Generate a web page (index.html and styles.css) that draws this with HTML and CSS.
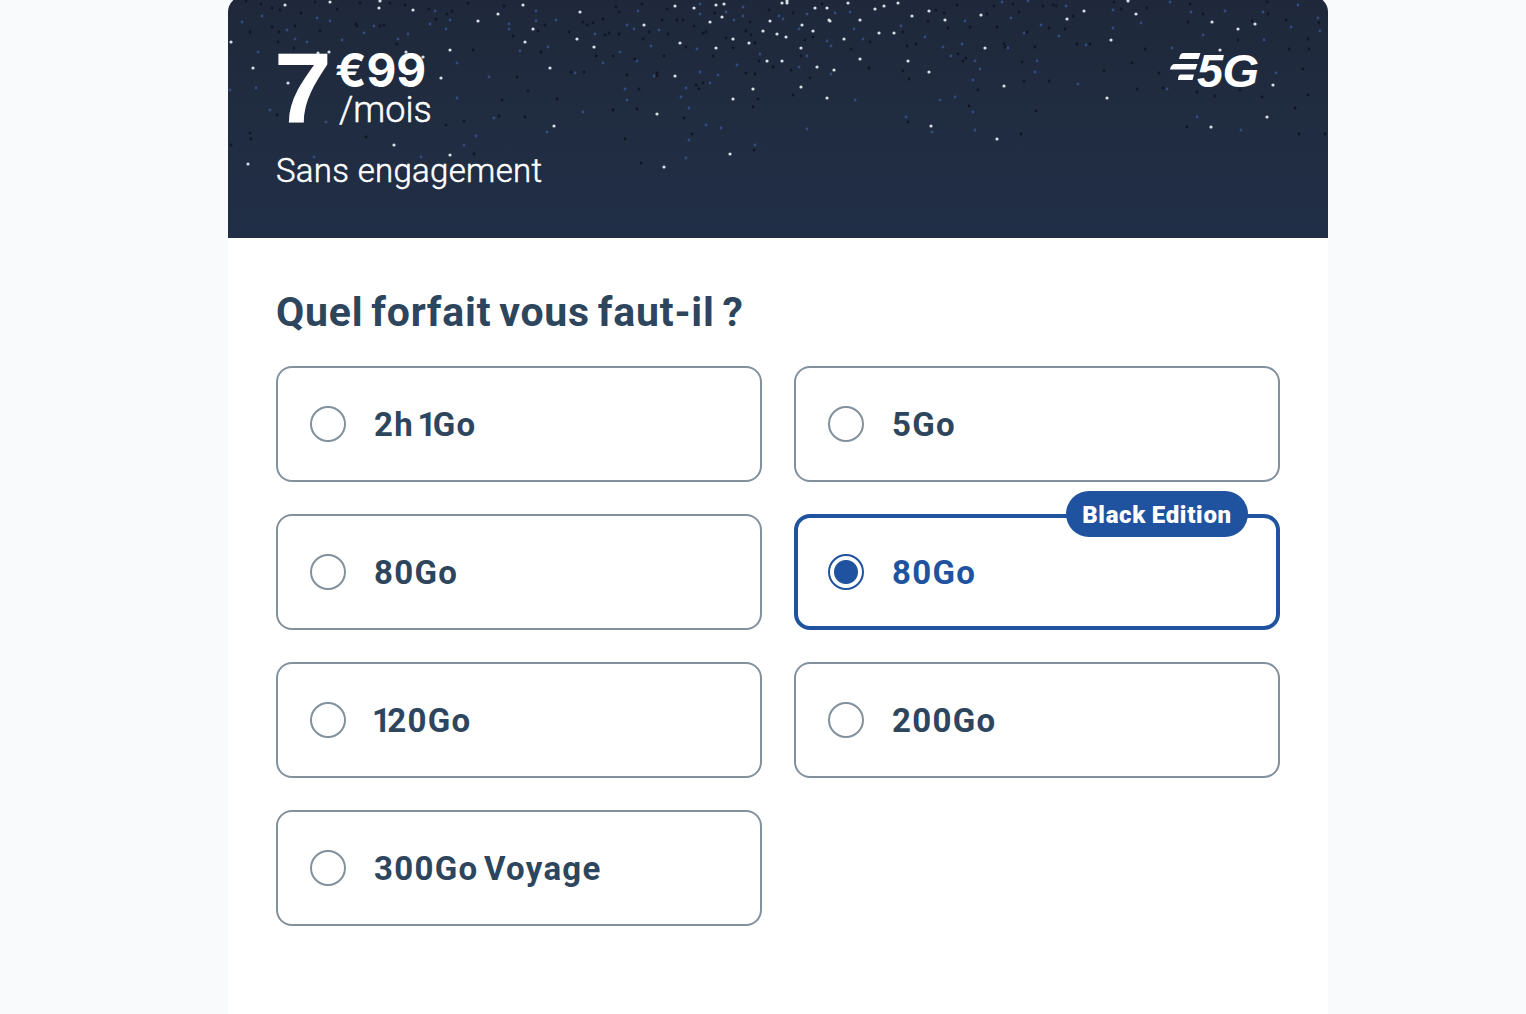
FILE: index.html
```html
<!DOCTYPE html>
<html lang="fr">
<head>
  <meta charset="utf-8">
  <title>Forfait mobile</title>
  <link rel="stylesheet" href="styles.css">
</head>
<body>
  <main class="offer">
    <header class="hero">
      <svg class="stars" id="stars" width="1100" height="238" viewBox="0 0 1100 238"></svg>
      <div class="hero-top">
        <div class="price">
          <span class="euros">7</span>
          <div class="price-side">
            <span class="cents">€99</span>
            <span class="period">/mois</span>
          </div>
        </div>
        <svg class="logo" width="96" height="44" viewBox="0 0 96 44">
          <path d="M13 2h17.500l-2 6H9q1-6 4-6zM5 13h22.500l-2 5.500H0q1-5.500 5-5.500zM11 23.500h13l-1.500 5.500H8q0-5.500 3-5.500z"/>
          <text class="logo-text" x="27" y="36" textLength="62">5G</text>
        </svg>
      </div>
      <p class="commitment">Sans engagement</p>
    </header>

    <form class="plans">
      <h1>Quel forfait vous faut-il ?</h1>
      <div class="grid">
        <label class="plan"><input type="radio" name="plan"><span>2h <i class="one">1</i>Go</span></label>
        <label class="plan"><input type="radio" name="plan"><span>5Go</span></label>
        <label class="plan"><input type="radio" name="plan"><span>80Go</span></label>
        <label class="plan selected"><input type="radio" name="plan" checked><span>80Go</span><b class="badge">Black Edition</b></label>
        <label class="plan"><input type="radio" name="plan"><span><i class="one">1</i>20Go</span></label>
        <label class="plan"><input type="radio" name="plan"><span>200Go</span></label>
        <label class="plan"><input type="radio" name="plan"><span>300Go Voyage</span></label>
      </div>
    </form>
  </main>

  <script>
  // x,y of each star in the header
  const sky = {
    dark: '18,1 22,32 33,4 44,8 52,10 44,27 51,32 50,42 67,26 66,48 57,58 73,13 87,2 92,31 109,9 128,24 132,3 129,26 152,26 156,25 162,3 177,5 169,44 208,19 219,14 201,9 224,11 245,50 240,3 276,6 285,36 310,31 313,52 317,25 341,32 355,22 359,25 343,72 356,72 289,77 300,91 329,99 274,100 271,116 297,117 218,125 246,154 138,137 22,133 23,139 3,145 49,115 236,121 365,23 375,19 381,33 377,35 391,34 385,56 368,56 407,59 399,75 411,89 409,109 385,110 397,139 413,163 456,118 464,134 429,73 429,76 468,85 471,89 475,83 436,56 440,34 421,32 415,39 434,20 449,20 455,20 466,26 475,33 478,32 458,47 485,56 498,38 505,48 518,31 523,35 522,22 527,43 531,61 518,73 527,74 545,67 563,70 565,95 582,78 530,99 525,107 526,150 573,56 577,40 585,37 623,49 641,68 642,42 679,46 688,44 675,32 700,21 708,10 716,13 720,28 729,5 730,54 735,61 675,71 681,79 680,122 391,12 388,7 414,4 439,9 487,13 541,10 565,13 594,4 738,58 741,106 750,90 742,27 759,14 766,6 769,27 776,44 777,47 785,4 791,12 794,62 796,81 799,32 807,47 808,111 793,134 815,6 821,28 821,81 825,5 828,6 837,29 845,16 849,44 862,44 876,71 886,2 893,9 904,63 909,89 917,49 919,8 931,73 935,88 960,22 962,4 975,14 969,92 987,96 959,127 1010,40 1012,90 1024,21 1034,97 1039,2 1040,14 1058,20 1061,49 1075,69 1080,39 1081,49 1080,95 1067,108 1071,134 1097,134 1091,23',
    blue: '14,22 34,16 59,30 67,39 79,42 89,18 102,21 30,52 114,40 136,33 146,26 170,39 180,34 202,24 207,11 218,29 222,20 281,24 281,29 308,11 308,21 328,20 320,47 292,51 28,88 42,110 229,63 261,77 229,98 347,73 355,112 98,122 248,136 236,145 86,157 193,157 2,90 266,118 319,132 367,34 399,25 406,29 431,30 410,11 423,46 392,52 409,61 375,63 397,89 399,100 426,76 458,88 453,97 461,108 461,140 458,158 478,125 493,128 490,75 482,83 472,72 509,65 515,7 515,16 506,20 498,12 551,16 555,19 571,29 579,14 532,54 579,56 571,67 599,41 603,46 603,74 607,13 622,12 626,29 635,39 627,100 579,129 527,145 673,26 697,37 715,47 723,56 734,44 737,21 712,100 727,97 678,117 704,132 472,4 472,14 469,49 747,61 752,69 745,80 745,112 747,130 780,48 796,33 807,72 809,61 813,25 831,36 838,6 850,84 858,45 885,28 885,10 913,23 942,2 783,18 774,2 800,1 963,12 975,35 997,11 944,48 1035,12 1036,40 1063,27 1070,5 1092,31 1090,18 1048,73 969,117 1013,130 939,89',
    white: '57,5 102,2 151,8 152,1 185,10 270,14 250,21 295,5 305,29 297,42 352,12 349,39 366,47 3,42 25,68 60,83 101,52 222,50 213,78 322,68 326,126 166,145 222,155 20,164 178,52 195,57 90,53 447,6 466,8 488,5 496,4 494,17 482,22 416,25 452,43 488,48 505,39 521,43 535,31 542,21 549,34 558,37 554,3 559,1 559,3 574,25 585,31 587,8 599,8 601,20 602,21 616,39 620,3 632,20 632,59 647,9 656,6 651,33 666,33 670,3 684,16 701,11 717,20 680,61 701,72 573,48 539,61 554,61 589,67 606,70 573,87 599,98 525,89 505,99 447,76 429,114 502,154 436,167 703,126 753,15 839,19 856,11 900,1 908,14 883,40 757,48 776,86 879,98 769,139 984,22 1010,29 1027,24 992,50 1045,85 1039,117 983,127'
  };
  const stars = document.getElementById('stars');

  for (const color in sky) {
    const path = document.createElementNS('http://www.w3.org/2000/svg', 'path');
    path.setAttribute('class', color);
    path.setAttribute('d', sky[color].split(' ').map(p => `M${p}h0.01`).join(''));
    stars.appendChild(path);
  }
  </script>
</body>
</html>
```
FILE: styles.css
```css
* {
  box-sizing: border-box;
}

body {
  margin: 0;
  background: #f8fafc;
  color: #2d455d;
  font-family: Roboto, "Liberation Sans", sans-serif;
  overflow: hidden;
}

.offer {
  width: 1100px;
  height: 1018px;
  margin: -4px 0 0 228px;
  background: #fff;
  border-radius: 16px 16px 0 0;
  overflow: hidden;
}

.hero {
  position: relative;
  height: 242px;
  padding: 48px;
  background: linear-gradient(#1f283b, #202c40 50%, #202e47);
  color: #fff;
}

.stars {
  position: absolute;
  left: 0;
  bottom: 0;
}

.stars path {
  fill: none;
  stroke-linecap: round;
  stroke-width: 2.8px;
}

.stars .dark {
  stroke: #101623;
}

.stars .blue {
  stroke: #344b80;
}

.stars .white {
  stroke: #d9dfe9;
  stroke-width: 3.2px;
}

.hero-top {
  position: relative;
  display: flex;
  justify-content: space-between;
  height: 88px;
}

.price {
  display: flex;
  gap: 7px;
  margin-left: -1px;
}

.euros {
  width: 53px;
  font: bold 100px/88px "Liberation Sans", sans-serif;
  transform: scaleX(1.04);
}

.price-side {
  display: flex;
  flex-direction: column;
}

.cents {
  font: bold 46px/52px Inter, sans-serif;
}

.period {
  margin-left: 4px;
  font-size: 36px;
  font-weight: 300;
  line-height: 28px;
  -webkit-text-stroke: 0.5px #fff;
}

.logo {
  margin: 7px 14px 0 0;
  fill: #fff;
  overflow: visible;
}

.logo-text {
  font: italic bold 47px "Liberation Sans", sans-serif;
}

.commitment {
  position: relative;
  margin: 19px 0 0;
  font-size: 33px;
  font-weight: 300;
  line-height: 40px;
  letter-spacing: 0.3px;
  -webkit-text-stroke: 0.5px #fff;
}

.plans {
  padding: 48px;
}

h1 {
  margin: 0 0 28px;
  font-size: 41px;
  line-height: 52px;
  letter-spacing: 0.8px;
  word-spacing: -3.2px;
}

.grid {
  display: grid;
  grid-template-columns: 1fr 1fr;
  gap: 32px;
}

.plan {
  position: relative;
  display: flex;
  align-items: center;
  gap: 28px;
  height: 116px;
  padding: 0 32px;
  border: 2px solid #82919e;
  border-radius: 16px;
  font-size: 33px;
  font-weight: 700;
  letter-spacing: 1.3px;
  word-spacing: -4px;
  cursor: pointer;
}

.plan input {
  appearance: none;
  width: 36px;
  height: 36px;
  margin: 0;
  border: 2px solid #82919e;
  border-radius: 50%;
}

.plan.selected {
  padding: 0 30px;
  border: 4px solid #20539f;
  color: #20539f;
}

.plan input:checked {
  border-color: #20539f;
  background: radial-gradient(circle, #20539f 11.500px, #fff 12.500px);
}

/* tighten the wide tabular 1 */
.one {
  margin: 0 -5px 0 -2px;
  font-style: normal;
}

.badge {
  position: absolute;
  top: -27px;
  right: 28px;
  width: 182px;
  height: 46px;
  border-radius: 23px;
  background: #20539f;
  color: #fff;
  font-size: 24px;
  line-height: 48px;
  letter-spacing: 0.7px;
  word-spacing: -1px;
  text-align: center;
}
```
